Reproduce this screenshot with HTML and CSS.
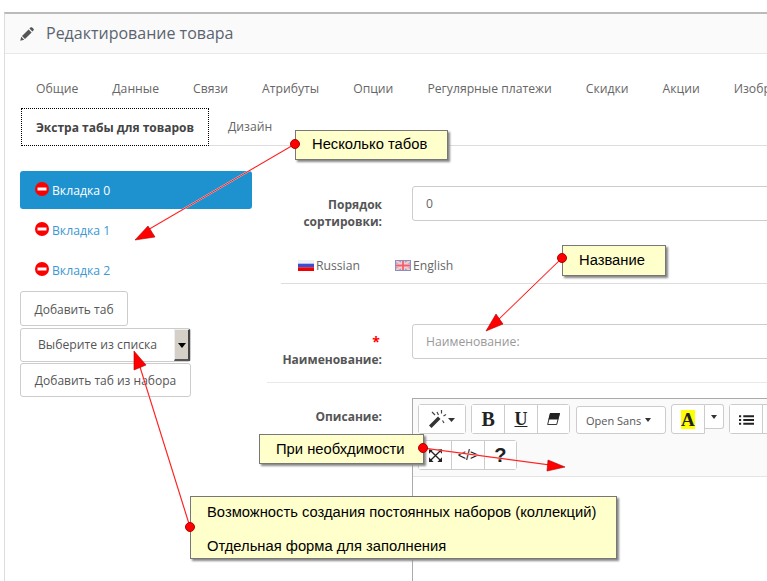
FILE: index.html
```html
<!DOCTYPE html>
<html lang="ru">
<head>
<meta charset="utf-8">
<title>Редактирование товара</title>
<link rel="stylesheet" href="styles.css">
</head>
<body>
<div class="panel">
  <header class="panel-head">
    <svg class="pencil" viewBox="0 0 14 14" width="14" height="14"><path d="M0.3 13.7 L1.2 9.8 L4.2 12.8 Z M2 9 L8.6 2.4 L11.6 5.4 L5 12 Z M9.4 1.6 L10.4 0.6 C11 0 11.7 0 12.2 0.5 L13.5 1.8 C14 2.3 14 3 13.4 3.6 L12.4 4.6 Z" fill="#555"/></svg>
    <h1 class="panel-title">Редактирование товара</h1>
  </header>
  <nav class="tabs-main">
    <a>Общие</a><a>Данные</a><a>Связи</a><a>Атрибуты</a><a>Опции</a><a>Регулярные платежи</a><a>Скидки</a><a>Акции</a><a>Изображения</a>
  </nav>
  <nav class="tabs-second">
    <a class="tab-active">Экстра табы для товаров</a><a class="tab-plain">Дизайн</a>
  </nav>
  <div class="layout">
    <aside class="side">
      <ul class="pills">
        <li class="pill pill-on"><svg class="minus" viewBox="0 0 14 14"><circle cx="7" cy="7" r="7" fill="#f00"/><rect x="2.5" y="5.5" width="9" height="3" fill="#fff"/></svg>Вкладка 0</li>
        <li class="pill"><svg class="minus" viewBox="0 0 14 14"><circle cx="7" cy="7" r="7" fill="#f00"/><rect x="2.5" y="5.5" width="9" height="3" fill="#fff"/></svg>Вкладка 1</li>
        <li class="pill"><svg class="minus" viewBox="0 0 14 14"><circle cx="7" cy="7" r="7" fill="#f00"/><rect x="2.5" y="5.5" width="9" height="3" fill="#fff"/></svg>Вкладка 2</li>
      </ul>
      <div class="btn btn-short">Добавить таб</div>
      <div class="pick"><span class="pick-text">Выберите из списка</span><span class="pick-arrow"></span></div>
      <div class="btn btn-wide">Добавить таб из набора</div>
    </aside>
    <main class="form">
      <div class="row row-sort">
        <label class="label">Порядок сортировки:</label>
        <div class="input">0</div>
      </div>
      <div class="langs">
        <span class="lang">
          <svg class="flag" viewBox="0 0 16 11"><rect width="16" height="4" fill="#f0f0f4"/><rect y="3.7" width="16" height="3.6" fill="#3a4fd0"/><rect y="7.3" width="16" height="3.7" fill="#f00000"/></svg>Russian</span>
        <span class="lang">
          <svg class="flag" viewBox="0 0 16 11"><rect width="16" height="11" fill="#9aa0d8"/><path d="M0 0 L16 11 M16 0 L0 11" stroke="#f4c8c8" stroke-width="2.4"/><path d="M8 0 V11 M0 5.5 H16" stroke="#f6d8d8" stroke-width="3.6"/><path d="M8 0 V11 M0 5.5 H16" stroke="#f0606a" stroke-width="1.8"/><rect x=".5" y=".5" width="15" height="10" fill="none" stroke="#8a8fc0"/></svg>English</span>
      </div>
      <div class="row row-name">
        <label class="label"><span class="star">*</span><br>Наименование:</label>
        <div class="input input-empty">Наименование:</div>
      </div>
      <div class="row row-desc">
        <label class="label label-desc">Описание:</label>
        <div class="editor">
          <div class="toolbar">
            <div class="tool-row">
              <div class="group"><span class="tool tool-wand">
                <svg viewBox="0 0 26 18" width="26" height="18"><path d="M0 15.5 L9 6.5 L11.5 9 L2.5 18 Z" fill="#333"/><path d="M8 2 L9.5 5 M3 2 L6 5 M12.5 0 V3.5 M17 4.5 L14.5 6 M13.5 10.5 L15 13" stroke="#444" stroke-width="1.2" fill="none"/><path d="M19 8 H26 L22.5 12 Z" fill="#333"/></svg>
              </span></div>
              <div class="group">
                <span class="tool tool-b">B</span><span class="tool tool-u">U</span>
                <span class="tool"><svg viewBox="0 0 14 13" width="13" height="12"><path d="M3.5 0.5 H13.5 L10.5 12.5 H0.7 Z" fill="#fff" stroke="#222"/><path d="M3.5 0 H14 L12 7 H1.6 Z" fill="#222"/></svg></span>
              </div>
              <div class="font-btn">Open Sans<i class="caret"></i></div>
              <div class="color">
                <span class="tool tool-color"><b class="color-a">A</b></span><span class="color-drop"><i class="caret"></i></span>
              </div>
              <div class="group">
                <span class="tool"><svg viewBox="0 0 14 10" width="15" height="11"><path d="M0 1h2v2H0zM4 1h10v2H4zM0 4.5h2v2H0zM4 4.5h10v2H4zM0 8h2v2H0zM4 8h10v2H4z" fill="#222"/></svg></span><span class="tool"></span>
              </div>
            </div>
            <div class="tool-row tool-row-two">
              <div class="group">
                <span class="tool"><svg viewBox="0 0 14 14" width="13" height="13"><path d="M1 1 L13 13 M13 1 L1 13" stroke="#222" stroke-width="1.4"/><path d="M0 0H5L0 5ZM14 0H9L14 5ZM0 14H5L0 9ZM14 14H9L14 9Z" fill="#222"/></svg></span><span class="tool tool-code">&lt;/&gt;</span><span class="tool tool-q">?</span>
              </div>
            </div>
          </div>
        </div>
      </div>
    </main>
  </div>
</div>

<svg class="arrows" viewBox="0 0 767 581" width="767" height="581">
  <g class="halo">
    <path d="M295 144 L146 231"/><path d="M562 258 L497 321"/><path d="M423 448 L550 465"/><path d="M190 527 L140 367"/>
  </g>
  <g class="line">
    <path d="M295 144 L146 231"/><path d="M562 258 L497 321"/><path d="M423 448 L550 465"/><path d="M190 527 L140 367"/>
  </g>
  <g class="head">
    <path d="M135 240 L148 226 L155 237 Z"/><path d="M486 331 L496 314 L503 324 Z"/><path d="M565 467 L548 460 L547 471 Z"/><path d="M134 351 L134 370 L146 365 Z"/>
  </g>
</svg>
<div class="note note-tabs">Несколько табов</div>
<div class="note note-name">Название</div>
<div class="note note-need">При необхдимости</div>
<div class="note note-sets"><p>Возможность создания постоянных наборов (коллекций)</p><p>Отдельная форма для заполнения</p></div>
<svg class="dots" viewBox="0 0 767 581" width="767" height="581">
  <circle cx="295" cy="144" r="4.5"/><circle cx="562" cy="258" r="4.5"/><circle cx="423" cy="448" r="4.5"/><circle cx="190" cy="527" r="4.5"/>
</svg>
</body>
</html>
```
FILE: styles.css
```css
* { box-sizing: border-box; }
html, body { margin: 0; height: 581px; overflow: hidden; background: #fff; }
body { position: relative; font: 12.2px/17px "Open Sans", sans-serif; color: #666; }

.panel { margin: 12px 0 0 4px; height: 569px; border-top: 2px solid #bbb; border-left: 1px solid #ddd; overflow: hidden; }
.panel-head { display: flex; align-items: center; height: 40px; padding-left: 15px; background: #fafafa; border-bottom: 1px solid #e8e8e8; }
.pencil { margin-right: 12px; }
.panel-title { margin: 0; font-size: 16px; font-weight: 400; color: #5a6470; }

.tabs-main { display: flex; flex-wrap: nowrap; gap: 34px; height: 54px; padding: 26px 0 0 31px; white-space: nowrap; }
.tabs-second { display: flex; height: 38px; margin-left: 16px; border-bottom: 1px solid #ddd; white-space: nowrap; }
.tab-active { width: 188px; height: 38px; padding-top: 10px; text-align: center; font-size: 12px; font-weight: 700; color: #444; background: #fff; border: 1px dotted #000; }
.tab-plain { padding: 10px 0 0 19px; }

.layout { display: flex; margin-top: 25px; padding-left: 15px; }
.side { flex: 0 0 232px; margin-right: 15px; }
.pills { margin: 0; padding: 0; list-style: none; }
.pill { display: flex; align-items: center; height: 40px; padding: 0 0 2px 15px; color: #3c97d3; }
.pill-on { height: 38px; padding-bottom: 0; border-radius: 3px; background: #1e91cf; color: #fff; margin-bottom: 2px; }
.minus { width: 14px; height: 14px; margin: -2px 3px 0 0; }
.btn { height: 35px; line-height: 35px; font-size: 12px; text-align: center; color: #555; background: #fff; border: 1px solid #ccc; border-radius: 3px; }
.btn-short { width: 108px; }
.btn-wide { width: 171px; height: 34px; line-height: 33px; }
.pick { display: flex; width: 171px; height: 34px; margin: 2px 0 1px; border: 1px solid #ccc; border-radius: 3px; background: #fff; }
.pick-text { flex: 1; line-height: 32px; padding-left: 17px; color: #555; }
.pick-arrow { position: relative; width: 16px; background: #d4d0c8; border-right: 2px solid #444; border-bottom: 2px solid #555; border-top: 1px solid #eee; border-left: 1px solid #eee; }
.pick-arrow::after { content: ""; position: absolute; left: 3px; top: 13px; border: 4px solid transparent; border-top: 5px solid #000; border-bottom: 0; }

.form { flex: 1; min-width: 500px; }
.row { display: flex; gap: 30px; }
.label { flex: 0 0 115px; text-align: right; font-size: 12px; font-weight: 700; color: #555; }
.input { flex: 0 0 400px; height: 35px; padding-left: 13px; line-height: 33px; color: #666; background: #fff; border: 1px solid #ccc; border-radius: 3px; }
.input-empty { color: #999; }
.row-sort { margin-top: 15px; height: 58px; }
.row-sort .label { padding-top: 10px; }
.langs { display: flex; gap: 35px; height: 40px; margin-left: 14px; padding: 13px 0 0 17px; border-bottom: 1px solid #ddd; }
.lang { display: flex; align-items: center; height: 17px; }
.flag { width: 16px; height: 11px; margin-right: 2px; }
.row-name { height: 99px; padding-top: 40px; border-bottom: 1px solid #e8e8e8; }
.row-name .label { padding-top: 9px; line-height: 17px; }
.star { color: #f00; font-size: 14px; padding-right: 2px; }
.row-desc { padding-top: 15px; height: 200px; }
.label-desc { padding-top: 10px; }
.editor { flex: 0 0 400px; height: 190px; border-top: 1px solid #aaa; border-left: 1px solid #aaa; }
.toolbar { height: 78px; padding: 5px 0 0 5px; background: #fafafa; border-bottom: 1px solid #e4e4e4; }
.tool-row { display: flex; gap: 5px; align-items: flex-start; white-space: nowrap; }
.tool-row-two { margin-top: 6px; }
.group { display: flex; background: #fff; border: 1px solid #ccc; border-radius: 3px; }
.tool { display: flex; align-items: center; justify-content: center; width: 32.33px; height: 28px; background: #fff; color: #222; border-left: 1px solid #ccc; }
.tool:first-child { border-left: 0; }
.tool-wand { width: 46px; }
.tool-b { font: 700 20px "Liberation Serif", serif; }
.tool-u { font: 700 18px "Liberation Serif", serif; text-decoration: underline; }
.tool-code { font: 14px "Liberation Sans", sans-serif; }
.tool-q { font: 700 20px "Liberation Sans", sans-serif; }
.font-btn { display: flex; align-items: center; width: 90px; height: 28px; margin: 2px 0 0 1px; padding-left: 9px; font-size: 11px; color: #555; background: #fff; border: 1px solid #ccc; border-radius: 3px; }
.caret { display: inline-block; margin-left: 4px; border: 3px solid transparent; border-top: 4px solid #333; border-bottom: 0; }
.color { display: flex; align-items: flex-start; }
.tool-color { width: 34px; height: 30px; border: 1px solid #ccc; border-radius: 3px 0 0 3px; }
.tool-color:first-child { border-left: 1px solid #ccc; }
.color-a { width: 14px; height: 19px; font: 700 19px/19px "Liberation Serif", serif; text-align: center; background: #ff0; color: #222; }
.color-drop { display: flex; align-items: center; justify-content: center; width: 19px; height: 25px; background: #fff; border: 1px solid #ccc; border-left: 0; border-radius: 0 3px 3px 0; }
.color-drop .caret { margin: 0; }

.arrows, .dots { position: absolute; left: 0; top: 0; pointer-events: none; }
.halo path { stroke: #ffc8c8; stroke-width: 1.6; fill: none; }
.line path { stroke: #f00; stroke-width: 0.9; fill: none; }
.head path { fill: #f00; stroke: #b00000; stroke-width: 0.6; }
.dots circle { fill: #f00; stroke: #b00000; stroke-width: 1; }

.note { position: absolute; font: 14.75px/18px "Liberation Sans", sans-serif; color: #000; background: #ffc; border: 1px solid #777; box-shadow: 2px 2px 2px #888; }
.note-tabs { left: 295px; top: 130px; width: 153px; height: 30px; padding: 4px 0 0 16px; }
.note-name { left: 562px; top: 245px; width: 104px; height: 31px; padding: 5px 0 0 16px; }
.note-need { left: 259px; top: 434px; width: 165px; height: 30px; padding: 5px 0 0 16px; }
.note-sets { left: 190px; top: 496px; width: 427px; height: 63px; padding: 6px 0 0 16px; }
.note-sets p { margin: 0 0 16px; }
```
